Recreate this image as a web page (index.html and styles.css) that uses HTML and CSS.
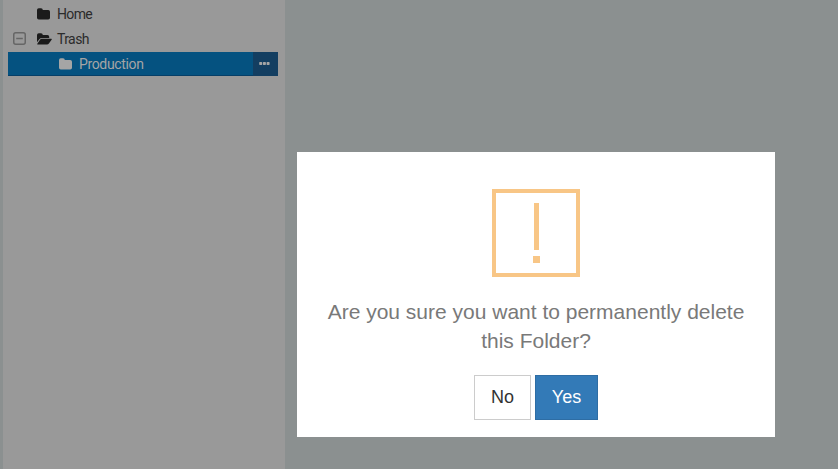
FILE: index.html
```html
<!DOCTYPE html>
<html lang="en">
<head>
<meta charset="utf-8">
<title>Folders</title>
<link rel="stylesheet" href="styles.css">
</head>
<body>
<aside class="sidebar">
  <div class="row">
    <span class="toggle-space"></span>
    <svg class="folder" viewBox="0 0 13 12"><path d="M1.8 .3H4Q5.8 .3 5.8 1.9H11.2Q13 1.9 13 3.7V9.7Q13 11.5 11.2 11.5H1.8Q0 11.5 0 9.7V2.1Q0 .3 1.8 .3Z"/></svg>
    <span class="name home">Home</span>
  </div>
  <div class="row">
    <svg class="toggle" viewBox="0 0 13 13"><rect x=".75" y=".75" width="11.5" height="11.5" rx="2"/><path d="M3.2 6.5H9.8"/></svg>
    <svg class="folder open" viewBox="0 0 15 12"><path d="M0 9.3V2.1Q0 .3 1.8 .3H4Q5.8 .3 5.8 1.9H10.5Q12.2 1.9 12.2 3.7V4.9H4.8Q3.4 4.9 2.5 6Z"/><path d="M4.8 5.7H14.2Q15.3 5.7 14.6 6.7L11.9 10.5Q11.2 11.5 10 11.5H.9Q-.2 11.5 .5 10.5L3 6.8Q3.7 5.7 4.8 5.7Z"/></svg>
    <span class="name trash">Trash</span>
  </div>
  <div class="row selected">
    <svg class="folder" viewBox="0 0 13 12"><path d="M1.8 .3H4Q5.8 .3 5.8 1.9H11.2Q13 1.9 13 3.7V9.7Q13 11.5 11.2 11.5H1.8Q0 11.5 0 9.7V2.1Q0 .3 1.8 .3Z"/></svg>
    <span class="name production">Production</span>
    <span class="more"><svg class="dots" viewBox="0 0 11 3"><rect x=".2" width="3" height="3" rx=".7"/><rect x="3.9" width="3" height="3" rx=".7"/><rect x="7.6" width="3" height="3" rx=".7"/></svg></span>
  </div>
</aside>
<main class="dialog">
  <div class="warning"><span class="bar"></span><span class="dot"></span></div>
  <p class="message">Are you sure you want to permanently delete this Folder?</p>
  <div class="actions">
    <button class="btn">No</button>
    <button class="btn primary">Yes</button>
  </div>
</main>
</body>
</html>
```
FILE: styles.css
```css
* { box-sizing: border-box; }
body {
  margin: 0;
  height: 469px;
  display: flex;
  align-items: flex-start;
  overflow: hidden;
  background: #8b9090;
  font-family: "Liberation Sans", Arial, sans-serif;
}
.sidebar {
  width: 282px;
  height: 469px;
  margin-left: 3px;
  padding: 2px 7px 0 5px;
  background: #999;
  font: 14px/24px Roboto, sans-serif;
  color: #2b2b2b;
}
.row {
  display: flex;
  align-items: center;
  height: 24px;
  margin-bottom: 1px;
}
.toggle-space { width: 29px; }
.toggle {
  width: 13px;
  height: 13px;
  margin: 0 11px 1px 5px;
  fill: none;
  stroke: #666;
  stroke-width: 1.5;
}
.folder { width: 13px; height: 12px; fill: #1b1b1b; }
.folder.open { width: 15px; }
.name { margin-left: 7px; white-space: nowrap; letter-spacing: -.65px; }
.trash { margin-left: 5px; letter-spacing: -.6px; }
.production { letter-spacing: -.35px; }
.selected {
  padding-left: 51px;
  background: #055280;
  border-bottom: 1px solid #063f68;
  color: #a5a5a5;
}
.selected .folder { fill: #a5a5a5; }
.more {
  display: flex;
  align-items: center;
  justify-content: center;
  width: 25px;
  height: 24px;
  margin: 0 0 -1px auto;
  padding: 0 2px 1px 0;
  background: #133e61;
}
.dots { width: 11px; height: 3px; fill: #a5a5a5; }
.dialog {
  display: flex;
  flex-direction: column;
  align-items: center;
  width: 478px;
  height: 285px;
  margin: 152px 0 0 12px;
  padding: 37px 15px 0;
  background: #fff;
}
.warning {
  display: flex;
  flex-direction: column;
  align-items: center;
  width: 88px;
  height: 88px;
  padding-top: 10px;
  border: 4px solid #f8c686;
}
.bar { width: 5px; height: 47px; background: #f8c686; }
.dot { width: 7px; height: 7px; margin-top: 6px; background: #f8c686; }
.message {
  margin: 20px 0 0;
  font-size: 21px;
  line-height: 29px;
  text-align: center;
  color: #797979;
}
.actions { display: flex; gap: 4px; margin-top: 20px; }
.btn {
  width: 57px;
  height: 45px;
  padding: 0 0 1px;
  border: 1px solid #ccc;
  background: #fff;
  color: #333;
  font: 18px "Liberation Sans", Arial, sans-serif;
}
.primary { width: 63px; border-color: #2e6da4; background: #337ab7; color: #fff; }
```
